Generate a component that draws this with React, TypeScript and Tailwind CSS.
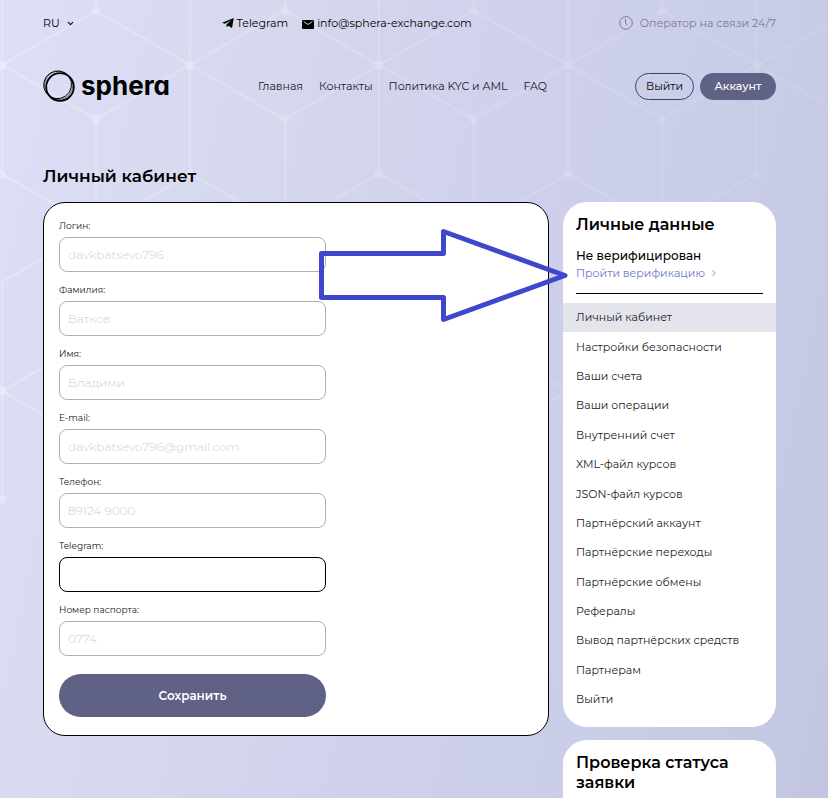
import { ChevronDown, ChevronRight } from "lucide-react";

type Field = {
  id: string;
  label: string;
  value: string;
  active?: boolean;
};

const FIELDS: Field[] = [
  { id: "login", label: "Логин:", value: "davkbatsevo796" },
  { id: "last-name", label: "Фамилия:", value: "Ватков" },
  { id: "first-name", label: "Имя:", value: "Владими" },
  { id: "email", label: "E-mail:", value: "davkbatsevo796@gmail.com" },
  { id: "phone", label: "Телефон:", value: "89124 9000" },
  { id: "telegram", label: "Telegram:", value: "", active: true },
  { id: "passport", label: "Номер паспорта:", value: "0774" },
];

const NAV = ["Главная", "Контакты", "Политика KYC и AML", "FAQ"];

const MENU = [
  "Личный кабинет",
  "Настройки безопасности",
  "Ваши счета",
  "Ваши операции",
  "Внутренний счет",
  "XML-файл курсов",
  "JSON-файл курсов",
  "Партнёрский аккаунт",
  "Партнёрские переходы",
  "Партнёрские обмены",
  "Рефералы",
  "Вывод партнёрских средств",
  "Партнерам",
  "Выйти",
];

// centres of the cubes in the background lattice
const HUBS = [
  [-92, -98], [96, -98], [285, -98], [474, -98], [662, -98],
  [2, 65], [190, 65], [379, 65], [568, 65], [757, 65],
  [96, 228], [285, 228], [474, 228], [662, 228],
  [2, 391], [190, 391], [379, 391], [568, 391],
];

const SPOKES = [
  [0, -109], [94, -54], [94, 54], [0, 109], [-94, 54], [-94, -54],
];

function Lattice() {
  return (
    <svg
      aria-hidden="true"
      className="pointer-events-none absolute top-0 left-0"
      width="828"
      height="520"
      viewBox="0 0 828 520"
    >
      <defs>
        <linearGradient id="fade" x1="0" y1="0" x2="828" y2="0" gradientUnits="userSpaceOnUse">
          <stop offset="0" stopColor="#fff" stopOpacity="0.24" />
          <stop offset="0.55" stopColor="#ecebf6" stopOpacity="0.22" />
          <stop offset="1" stopColor="#e4e0ee" stopOpacity="0.16" />
        </linearGradient>
      </defs>
      <g stroke="url(#fade)" fill="url(#fade)">
        <path
          fill="none"
          strokeWidth="2.5"
          d={HUBS.map(([x, y]) =>
            SPOKES.map(([dx, dy]) => `M${x} ${y}L${x + dx} ${y + dy}`).join(""),
          ).join("")}
        />
        {HUBS.map(([x, y]) => (
          <g key={`${x}-${y}`} stroke="none">
            <circle cx={x} cy={y} r="4.5" />
            <circle cx={x} cy={y + 109} r="4.5" />
            <circle cx={x + 94} cy={y + 54} r="4.5" />
          </g>
        ))}
      </g>
    </svg>
  );
}

function Logo() {
  return (
    <a href="#" className="flex items-center gap-1.5 text-black">
      <svg width="32" height="32" viewBox="0 0 32 32" fill="none" stroke="currentColor" aria-hidden="true">
        <circle cx="17" cy="17" r="13.8" strokeWidth="1.8" />
        <ellipse cx="14.6" cy="14.8" rx="14" ry="13.800" strokeWidth="0.9" transform="rotate(-35 14.6 14.8)" />
        <ellipse cx="15.6" cy="15.400" rx="14.2" ry="14.2" strokeWidth="0.5" />
      </svg>
      <span className="font-[Inter,sans-serif] text-[26px] leading-8 font-bold [font-feature-settings:'cv11']">
        sphera
      </span>
    </a>
  );
}

function TopBar() {
  return (
    <div className="flex h-[46px] items-center justify-between text-[11px]">
      <button className="flex items-center gap-1.5">
        RU
        <ChevronDown size={9} strokeWidth={3} />
      </button>

      <div className="flex items-center gap-3.5">
        <a href="#" className="flex items-center gap-[3px]">
          <svg width="12" height="10" viewBox="0 0 12 10" aria-hidden="true">
            <path d="M11.800 0 0 4.700l3 1.100L9.300 2 4.500 6.500v2.800l1.700-1.600 3.800 2.300Z" />
          </svg>
          Telegram
        </a>
        <a href="#" className="flex items-center gap-[3px]">
          <svg width="12" height="9" viewBox="0 0 12 9" className="mt-0.5" aria-hidden="true">
            <rect width="12" height="9" rx="1" />
            <path d="M1.500 1.500 6 4.500l4.500-3" fill="none" stroke="#d8daf0" strokeWidth="0.9" />
          </svg>
          info@sphera-exchange.com
        </a>
      </div>

      <div className="flex items-center gap-[7px] text-[#7b7c90]">
        <svg width="14" height="14" viewBox="0 0 14 14" fill="none" stroke="currentColor" aria-hidden="true">
          <circle cx="7" cy="7" r="6.3" />
          <path d="M6.500 3v4.300l2 1.500" />
        </svg>
        Оператор на связи 24/7
      </div>
    </div>
  );
}

function Header() {
  return (
    <header className="flex h-20 items-center justify-between">
      <Logo />
      <nav className="flex gap-4 text-[11px] text-[#16171f]">
        {NAV.map((item) => (
          <a key={item} href="#">
            {item}
          </a>
        ))}
      </nav>
      <div className="flex gap-1.5 text-[11px]">
        <button className="h-[27px] w-[59px] rounded-full border border-[#34406f]">
          Выйти
        </button>
        <button className="h-[27px] w-[76px] rounded-full bg-[#5f6285] font-medium text-white">
          Аккаунт
        </button>
      </div>
    </header>
  );
}

function ProfileForm() {
  return (
    <form className="relative flex-1 self-start rounded-[22px] border border-black bg-white px-[15px] pt-3.5 pb-[18px]">
      <div className="flex max-w-[267px] flex-col gap-[9px]">
        {FIELDS.map((field) => (
          <div key={field.id} className="flex flex-col gap-0.5">
            <label htmlFor={field.id} className="text-[9px] leading-[18px] text-[#16161c]">
              {field.label}
            </label>
            <input
              id={field.id}
              defaultValue={field.value}
              className={`h-[35px] rounded-lg border px-2 text-xs font-light text-[#d0d0d0] outline-none ${
                field.active ? "border-black" : "border-[#b0b0b0]"
              }`}
            />
          </div>
        ))}
        <button
          type="button"
          className="mt-[9px] h-[43px] rounded-full bg-[#5f6285] text-xs font-semibold text-white"
        >
          Сохранить
        </button>
      </div>

      {/* pointer to the verification link */}
      <svg
        aria-hidden="true"
        className="pointer-events-none absolute top-[25px] left-[274px] z-10"
        width="252"
        height="98"
        viewBox="318 228 252 98"
      >
        <path
          d="M321.500 253.500H443.500V231.500L565 275.500 443.500 319.500V297.500H321.500Z"
          fill="none"
          stroke="#3f48cc"
          strokeWidth="5"
          strokeLinejoin="round"
        />
      </svg>
    </form>
  );
}

function Sidebar() {
  return (
    <aside className="flex w-[213px] shrink-0 flex-col gap-[13px]">
      <section className="rounded-3xl bg-white py-[13px]">
        <div className="mx-[13px] border-b border-black pb-3">
          <h2 className="text-base leading-5 font-semibold">Личные данные</h2>
          <p className="mt-[11px] text-xs leading-[19px] font-medium">Не верифицирован</p>
          <a href="#" className="flex items-center gap-1 text-[11px] leading-4 text-[#7075cc]">
            Пройти верификацию
            <ChevronRight size={10} />
          </a>
        </div>
        <ul className="mt-[9px] grid min-h-[411px] auto-rows-fr text-[11px] text-[#1c1c22]">
          {MENU.map((item, i) => (
            <li key={item} className={i === 0 ? "bg-[#e4e5ec]" : ""}>
              <a href="#" className="flex h-full items-center px-[13px]">
                {item}
              </a>
            </li>
          ))}
        </ul>
      </section>

      <section className="flex-1 rounded-t-3xl bg-white px-[13px] pt-[13px]">
        <h2 className="text-base leading-5 font-semibold">Проверка статуса заявки</h2>
      </section>
    </aside>
  );
}

export default function App() {
  return (
    <div className="relative flex min-h-screen flex-col overflow-hidden bg-[linear-gradient(102deg,#dcdff5_0%,#d5d7ed_32%,#d0d1ed_50%,#c9cde8_75%,#c3c6e1_100%)] pr-[52px] pl-[43px] font-[Montserrat,Inter,'Open_Sans',sans-serif] text-black">
      <Lattice />
      <div className="relative flex flex-1 flex-col">
        <TopBar />
        <Header />
        <h1 className="mt-[38px] text-[17px] leading-6 font-semibold">Личный кабинет</h1>
        <main className="mt-3.5 flex flex-1 gap-3.5">
          <ProfileForm />
          <Sidebar />
        </main>
      </div>
    </div>
  );
}
